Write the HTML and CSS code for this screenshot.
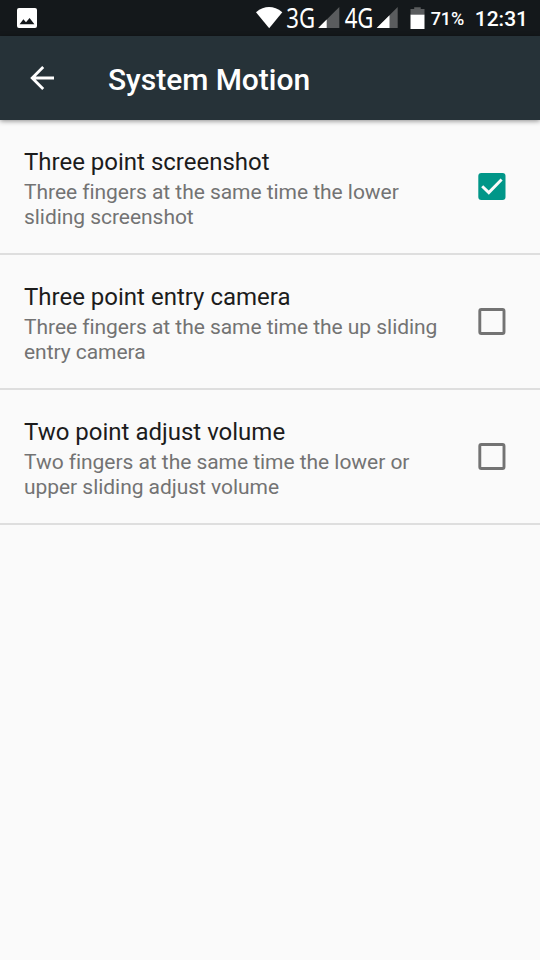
FILE: index.html
```
<!DOCTYPE html>
<html lang="en">
<head>
<meta charset="utf-8">
<title>System Motion</title>
<link rel="stylesheet" href="styles.css">
</head>
<body>
<div class="status">
  <svg class="picture" width="20" height="20" viewBox="0 0 20 20"><path fill="#fff" fill-rule="evenodd" d="M2 0H18Q20 0 20 2V18Q20 20 18 20H2Q0 20 0 18V2Q0 0 2 0ZM2.6 16.2H17.4L12.6 10 9 14.3 6.4 11.3Z"/></svg>
  <svg class="indicators" width="170" height="36" viewBox="0 0 170 36">
    <path fill="#fff" d="M0 12.2Q13 2 26.3 12.2L13.2 28.2Z"/>
    <text class="network" x="30.3" y="28.4" textLength="28.8" lengthAdjust="spacingAndGlyphs">3G</text>
    <path fill="#5a5c5e" d="M83.3 7V28H62.2Z"/>
    <path fill="#fff" d="M70.7 19.5V28H62.2Z"/>
    <text class="network" x="88.7" y="28.4" textLength="28.8" lengthAdjust="spacingAndGlyphs">4G</text>
    <path fill="#5a5c5e" d="M141.7 7V28H120.7Z"/>
    <path fill="#fff" d="M133.5 15.2V28H120.7Z"/>
    <path fill="#5a5c5e" d="M158.2 7.2H164.7V9H168.5V15H154.5V9H158.2Z"/>
    <path fill="#fff" d="M154.5 14.7H168.5V29H154.5Z"/>
  </svg>
  <span class="percent">71%</span>
  <span class="clock">12:31</span>
</div>
<header class="bar">
  <svg class="back" width="24" height="24" viewBox="0 0 24 24"><path fill="none" stroke="#fff" stroke-width="2.8" d="M24 12H2.2M13.2 1L2.2 12L13.2 23"/></svg>
  <h1 class="heading">System Motion</h1>
</header>
<main>
  <section class="row">
    <div class="copy">
      <h2 class="title">Three point screenshot</h2>
      <p class="summary">Three fingers at the same time the lower<br>sliding screenshot</p>
    </div>
    <svg class="box" width="28" height="27" viewBox="0 0 28 27"><rect x=".3" width="27.2" height="27" rx="3" fill="#009688"/><path fill="none" stroke="#fafafa" stroke-width="2.9" d="M4.2 13.2L10.8 19.6L23.6 6.6"/></svg>
  </section>
  <section class="row">
    <div class="copy">
      <h2 class="title">Three point entry camera</h2>
      <p class="summary">Three fingers at the same time the up sliding<br>entry camera</p>
    </div>
    <svg class="box" width="28" height="27" viewBox="0 0 28 27"><rect x="1.8" y="1.5" width="24.2" height="24" rx="1.5" fill="none" stroke="#737373" stroke-width="2.9"/></svg>
  </section>
  <section class="row">
    <div class="copy">
      <h2 class="title">Two point adjust volume</h2>
      <p class="summary">Two fingers at the same time the lower or<br>upper sliding adjust volume</p>
    </div>
    <svg class="box" width="28" height="27" viewBox="0 0 28 27"><rect x="1.8" y="1.5" width="24.2" height="24" rx="1.5" fill="none" stroke="#737373" stroke-width="2.9"/></svg>
  </section>
</main>
</body>
</html>
```
FILE: styles.css
```
* { box-sizing: border-box; margin: 0; padding: 0; }
body { width: 540px; height: 960px; overflow: hidden; background: #fafafa; font-family: Roboto, sans-serif; }
svg { display: block; flex: none; }
.status { display: flex; align-items: center; height: 36px; padding: 0 12px 0 17px; background: #14181b; color: #fff; }
.indicators { margin-left: auto; }
.network { font: 26.5px "Noto Sans", sans-serif; fill: #fff; }
.percent { margin-left: 5px; width: 44px; font-size: 18px; font-weight: 500; letter-spacing: -.1px; line-height: 36px; padding-top: 2px; white-space: nowrap; }
.clock { font-size: 21px; font-weight: 500; line-height: 36px; padding-top: 2px; }
.bar { display: flex; align-items: center; height: 84px; padding: 0 30px; background: #263238; box-shadow: 0 1px 5px rgba(0, 0, 0, .45); }
.heading { margin-left: 54px; padding-top: 3px; color: #fff; font-size: 30px; font-weight: 500; letter-spacing: -.04px; line-height: 36px; }
.row { display: flex; align-items: flex-start; justify-content: space-between; height: 135px; padding: 27px 34px 0 24px; border-bottom: 2px solid #dedede; }
.title { padding-top: 1px; color: #1c1c1c; font-size: 24px; font-weight: 400; line-height: 28px; }
.summary { margin-top: 3.5px; color: #737373; font-size: 21px; letter-spacing: -.045px; line-height: 25px; white-space: nowrap; font-variant-ligatures: common-ligatures; }
.box { margin-top: 26px; }
```
